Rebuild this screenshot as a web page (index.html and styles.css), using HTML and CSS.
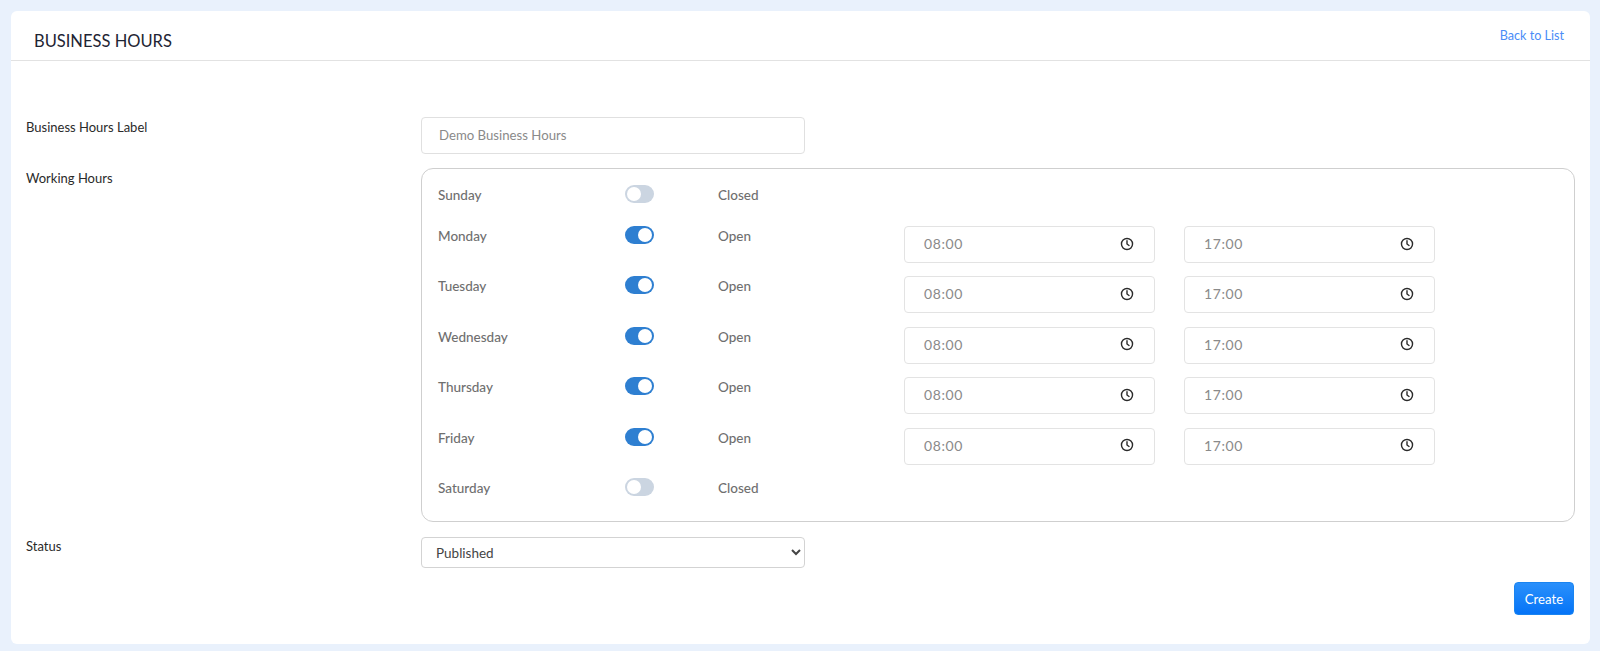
FILE: index.html
```html
<!DOCTYPE html>
<html lang="en">
<head>
<meta charset="utf-8">
<title>Business Hours</title>
<link rel="stylesheet" href="styles.css">
</head>
<body>
<main class="card">
  <header class="card-head">
    <h1 class="title">BUSINESS HOURS</h1>
    <a class="back" href="#">Back to List</a>
  </header>
  <form class="form">
    <div class="field field-label">
      <label class="label">Business Hours Label</label>
      <input class="text-input" type="text" placeholder="Demo Business Hours">
    </div>
    <div class="field field-hours">
      <label class="label">Working Hours</label>
      <div class="panel">
        <div class="day closed"><span class="day-name">Sunday</span><span class="toggle"><span class="knob"></span></span><span class="state">Closed</span></div>
        <div class="day open"><span class="day-name">Monday</span><span class="toggle on"><span class="knob"></span></span><span class="state">Open</span>
          <div class="times">
            <div class="time"><span class="time-val">08:00</span><svg class="clock" viewBox="0 0 24 24"><circle cx="12" cy="12" r="9.5"/><path d="M12 6.5V12l3.5 2.5"/></svg></div>
            <div class="time"><span class="time-val">17:00</span><svg class="clock" viewBox="0 0 24 24"><circle cx="12" cy="12" r="9.5"/><path d="M12 6.5V12l3.5 2.5"/></svg></div>
          </div>
        </div>
        <div class="day open"><span class="day-name">Tuesday</span><span class="toggle on"><span class="knob"></span></span><span class="state">Open</span>
          <div class="times">
            <div class="time"><span class="time-val">08:00</span><svg class="clock" viewBox="0 0 24 24"><circle cx="12" cy="12" r="9.5"/><path d="M12 6.5V12l3.5 2.5"/></svg></div>
            <div class="time"><span class="time-val">17:00</span><svg class="clock" viewBox="0 0 24 24"><circle cx="12" cy="12" r="9.5"/><path d="M12 6.5V12l3.5 2.5"/></svg></div>
          </div>
        </div>
        <div class="day open"><span class="day-name">Wednesday</span><span class="toggle on"><span class="knob"></span></span><span class="state">Open</span>
          <div class="times">
            <div class="time"><span class="time-val">08:00</span><svg class="clock" viewBox="0 0 24 24"><circle cx="12" cy="12" r="9.5"/><path d="M12 6.5V12l3.5 2.5"/></svg></div>
            <div class="time"><span class="time-val">17:00</span><svg class="clock" viewBox="0 0 24 24"><circle cx="12" cy="12" r="9.5"/><path d="M12 6.5V12l3.5 2.5"/></svg></div>
          </div>
        </div>
        <div class="day open"><span class="day-name">Thursday</span><span class="toggle on"><span class="knob"></span></span><span class="state">Open</span>
          <div class="times">
            <div class="time"><span class="time-val">08:00</span><svg class="clock" viewBox="0 0 24 24"><circle cx="12" cy="12" r="9.5"/><path d="M12 6.5V12l3.5 2.5"/></svg></div>
            <div class="time"><span class="time-val">17:00</span><svg class="clock" viewBox="0 0 24 24"><circle cx="12" cy="12" r="9.5"/><path d="M12 6.5V12l3.5 2.5"/></svg></div>
          </div>
        </div>
        <div class="day open"><span class="day-name">Friday</span><span class="toggle on"><span class="knob"></span></span><span class="state">Open</span>
          <div class="times">
            <div class="time"><span class="time-val">08:00</span><svg class="clock" viewBox="0 0 24 24"><circle cx="12" cy="12" r="9.5"/><path d="M12 6.5V12l3.5 2.5"/></svg></div>
            <div class="time"><span class="time-val">17:00</span><svg class="clock" viewBox="0 0 24 24"><circle cx="12" cy="12" r="9.5"/><path d="M12 6.5V12l3.5 2.5"/></svg></div>
          </div>
        </div>
        <div class="day closed"><span class="day-name">Saturday</span><span class="toggle"><span class="knob"></span></span><span class="state">Closed</span></div>
      </div>
    </div>
    <div class="field field-status">
      <label class="label">Status</label>
      <select class="select"><option>Published</option></select>
    </div>
    <div class="actions"><button class="btn" type="button">Create</button></div>
  </form>
</main>
</body>
</html>
```
FILE: styles.css
```css
* { box-sizing: border-box; }
html, body { margin: 0; height: 651px; overflow: hidden; }
body {
  background: #e9f1fc;
  padding: 11px 10px 7px 11px;
  font-family: "Lato", "Liberation Sans", sans-serif;
}
.card {
  background: #fff;
  border-radius: 6px;
  height: 633px;
}
.card-head {
  height: 50px;
  border-bottom: 1px solid #e2e2e2;
  display: flex;
  justify-content: space-between;
  padding: 0 26px 0 23px;
}
.title {
  margin: 18px 0 0;
  font-size: 16.5px;
  line-height: 24px;
  font-weight: 400;
  color: #1e2433;
}
.back {
  margin-top: 15px;
  font-size: 12.6px;
  line-height: 20px;
  color: #4a8cf7;
  text-decoration: none;
}
.form { padding: 56px 15px 0 15px; }
.field { display: flex; align-items: flex-start; }
.label {
  width: 395px;
  flex: none;
  font-size: 13px;
  line-height: 21px;
  color: #2a2a2a;
}
.field-label { height: 51px; }
.text-input {
  width: 384px;
  height: 37px;
  border: 1px solid #e0e0e0;
  border-radius: 4px;
  padding: 0 17px 2px;
  font: 13.2px "Lato", "Liberation Sans", sans-serif;
  outline: none;
}
.text-input::placeholder { color: #8a8a8a; opacity: 1; }
.panel {
  flex: 1;
  height: 354px;
  border: 1px solid #cfcfcf;
  border-radius: 12px;
  padding: 16px 0 0 16px;
}
.day {
  display: flex;
  align-items: flex-start;
  font-size: 13.5px;
  line-height: 21px;
  font-weight: 500;
  color: #6f6f6f;
}
.day.closed { height: 41px; }
.day.open { height: 50.4px; }
.day-name { width: 187px; flex: none; }
.toggle {
  width: 29px;
  height: 18px;
  flex: none;
  border-radius: 9px;
  background: #cbd5e1;
  padding: 2px;
  display: flex;
}
.toggle.on { background: #2e7fd1; justify-content: flex-end; }
.knob {
  width: 14px;
  height: 14px;
  border-radius: 50%;
  background: #fff;
}
.state { width: 186px; margin-left: 64px; flex: none; }
.times { display: flex; gap: 29.5px; }
.time {
  width: 250.5px;
  height: 37px;
  border: 1px solid #e3e3e3;
  border-radius: 4px;
  display: flex;
  align-items: center;
  justify-content: space-between;
  padding: 0 20px 2px 19px;
  font-size: 14px;
  font-weight: 400;
  color: #8a8a8a;
}
.time-val { letter-spacing: .6px; }
.clock {
  width: 14px;
  height: 14px;
  fill: none;
  stroke: #2a2a2a;
  stroke-width: 2.4;
  stroke-linecap: round;
  stroke-linejoin: round;
}
.field-status { margin-top: 15px; }
.field-status .label { margin-top: -1px; }
.select {
  width: 384px;
  height: 31px;
  border: 1px solid #d3d3d3;
  border-radius: 4px;
  background: #fff;
  padding: 0 10px;
  font: 13.5px "Lato", "Liberation Sans", sans-serif;
  color: #444;
}
.actions { display: flex; justify-content: flex-end; margin-top: 14px; padding-right: 1px; }
.btn {
  width: 60px;
  height: 33px;
  border: 1px solid #1a84f0;
  border-radius: 4px;
  background: linear-gradient(#2a90fb, #0574f7);
  color: #fff;
  font: 13.2px "Lato", "Liberation Sans", sans-serif;
  padding: 0;
}
```
